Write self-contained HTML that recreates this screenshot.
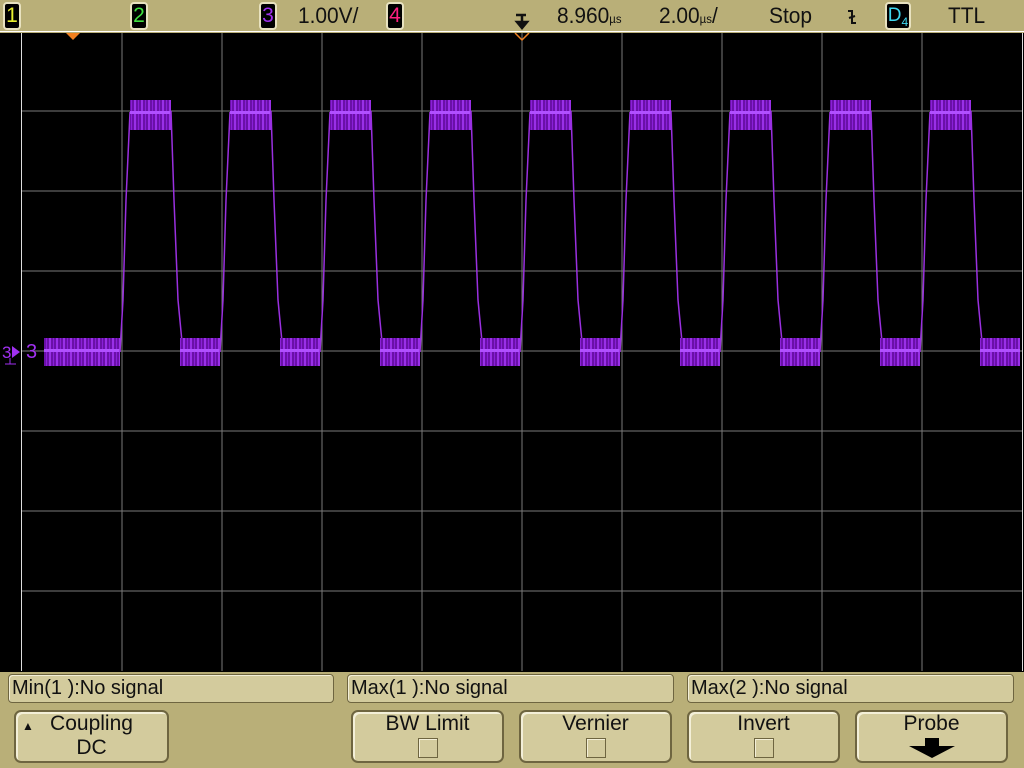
<!DOCTYPE html>
<html><head><meta charset="utf-8"><style>
*{margin:0;padding:0;box-sizing:border-box}
body{width:1024px;height:768px;overflow:hidden;background:#b9af78;font-family:"Liberation Sans",sans-serif;position:relative}
.top{position:absolute;left:0;top:0;width:1024px;height:32px;background:#b9af78;border-bottom:1px solid #fff}
.t{position:absolute;top:3px;font-size:22px;color:#111;line-height:26px;transform:scaleX(.95);transform-origin:left}
.badge{position:absolute;top:2px;height:28px;width:18px;background:#000;border:2px solid #e8e2c0;border-radius:4px;font-size:21px;line-height:24px;text-align:center}
.scr{position:absolute;left:0;top:33px;width:1024px;height:639px;background:#000}
.meas{position:absolute;top:674px;height:29px;background:#d3cb9d;border:1px solid #6e6540;border-radius:4px;font-size:20px;line-height:27px;padding-left:3px;color:#111;box-shadow:inset 1px 1px 0 #f3efd8}
.sk{position:absolute;top:710px;height:53px;background:#d3cb9d;border:2px solid #6e6540;border-radius:7px;font-size:21px;line-height:24px;text-align:center;color:#111;box-shadow:inset 2px 2px 0 #f3efd8}
.cb{display:block;margin:2px auto 0;width:20px;height:20px;border:1px solid #6e6540;box-shadow:inset 1px 1px 0 #f3efd8}
</style></head><body>
<div class="top">
<div class="badge" style="left:3px;color:#e8f030">1</div>
<div class="badge" style="left:130px;color:#40e040">2</div>
<div class="badge" style="left:259px;color:#a030f0">3</div>
<div class="t" style="left:298px">1.00V/</div>
<div class="badge" style="left:386px;color:#ff2080">4</div>
<svg style="position:absolute;left:514px;top:13px" width="16" height="18" viewBox="0 0 16 18"><path d="M2 2H12M8 2V12M3 9L8 15L13 9Z" stroke="#111" stroke-width="2.5" fill="#111"/></svg>
<div class="t" style="left:557px">8.960<span style="font-size:12px">µs</span></div>
<div class="t" style="left:659px">2.00<span style="font-size:12px">µs</span>/</div>
<div class="t" style="left:769px">Stop</div>
<svg style="position:absolute;left:846px;top:8px" width="12" height="18" viewBox="0 0 12 18"><path d="M2 3H6V15H10M3 10L9 8" stroke="#111" stroke-width="2" fill="none"/></svg>
<div class="badge" style="left:885px;width:26px;color:#40d8f0;font-size:19px">D<sub style="font-size:12px">4</sub></div>
<div class="t" style="left:948px">TTL</div>
</div>
<div class="scr">
<svg width="1024" height="639" viewBox="0 33 1024 639">
<defs>
<pattern id="nz" width="7" height="30" patternUnits="userSpaceOnUse">
<rect width="7" height="30" fill="#6a10a8"/>
<rect x="0" width="2" height="30" fill="#9a30e8"/><rect x="4" width="1" height="30" fill="#8a20d8"/>
</pattern>
<g id="p">
<polyline points="0,352 3,300 6,200 10,112" fill="none" stroke="#9a30e0" stroke-width="1.5"/>
<rect x="10" y="100" width="41" height="30" fill="url(#nz)"/>
<rect x="10" y="111" width="41" height="3" fill="#b050ff"/>
<polyline points="51,111 54,200 58,300 62,342" fill="none" stroke="#9a30e0" stroke-width="1.5"/>
<rect x="60" y="338" width="40" height="28" fill="url(#nz)"/>
<rect x="60" y="349" width="40" height="3" fill="#b050ff"/>
</g>
</defs>
<g stroke="#7a7a7a" stroke-width="1">
<line x1="122" y1="33" x2="122" y2="671"/><line x1="222" y1="33" x2="222" y2="671"/><line x1="322" y1="33" x2="322" y2="671"/><line x1="422" y1="33" x2="422" y2="671"/><line x1="522" y1="33" x2="522" y2="671"/><line x1="622" y1="33" x2="622" y2="671"/><line x1="722" y1="33" x2="722" y2="671"/><line x1="822" y1="33" x2="822" y2="671"/><line x1="922" y1="33" x2="922" y2="671"/>
<line x1="22" y1="111" x2="1022" y2="111"/><line x1="22" y1="191" x2="1022" y2="191"/><line x1="22" y1="271" x2="1022" y2="271"/><line x1="22" y1="351" x2="1022" y2="351"/><line x1="22" y1="431" x2="1022" y2="431"/><line x1="22" y1="511" x2="1022" y2="511"/><line x1="22" y1="591" x2="1022" y2="591"/>
</g>
<line x1="21.5" y1="33" x2="21.5" y2="671" stroke="#ddd"/>
<line x1="1022.5" y1="33" x2="1022.5" y2="671" stroke="#ddd"/>
<rect x="44" y="338" width="76" height="28" fill="url(#nz)"/>
<rect x="44" y="349" width="76" height="3" fill="#b050ff"/>
<use href="#p" x="120"/><use href="#p" x="220"/><use href="#p" x="320"/><use href="#p" x="420"/><use href="#p" x="520"/><use href="#p" x="620"/><use href="#p" x="720"/><use href="#p" x="820"/><use href="#p" x="920"/>
<polygon points="66,33 80,33 73,40" fill="#f08020"/>
<polyline points="515,33 522,40 529,33" fill="none" stroke="#f08020" stroke-width="1.5"/>
<text x="2" y="358" fill="#a030f0" font-size="17" font-family="Liberation Sans">3</text>
<polygon points="12,346 20,352 12,358" fill="#a030f0"/>
<line x1="10" y1="358" x2="10" y2="364" stroke="#a030f0"/><line x1="5" y1="364" x2="16" y2="364" stroke="#a030f0"/>
<text x="26" y="358" fill="#a030f0" font-size="20" font-family="Liberation Sans">3</text>
</svg>
</div>
<div class="meas" style="left:8px;width:326px">Min(1 ):No signal</div>
<div class="meas" style="left:347px;width:327px">Max(1 ):No signal</div>
<div class="meas" style="left:687px;width:327px">Max(2 ):No signal</div>
<div class="sk" style="left:14px;width:155px"><span style="position:absolute;left:6px;top:2px;font-size:12px">▲</span>Coupling<br>DC</div>
<div class="sk" style="left:351px;width:153px">BW Limit<span class="cb"></span></div>
<div class="sk" style="left:519px;width:153px">Vernier<span class="cb"></span></div>
<div class="sk" style="left:687px;width:153px">Invert<span class="cb"></span></div>
<div class="sk" style="left:855px;width:153px">Probe<svg width="54" height="24" style="display:block;margin:0 auto" viewBox="0 0 54 24"><polygon points="20,2 34,2 34,10 50,10 27,22 4,10 20,10" fill="#000"/></svg></div>
</body></html>
